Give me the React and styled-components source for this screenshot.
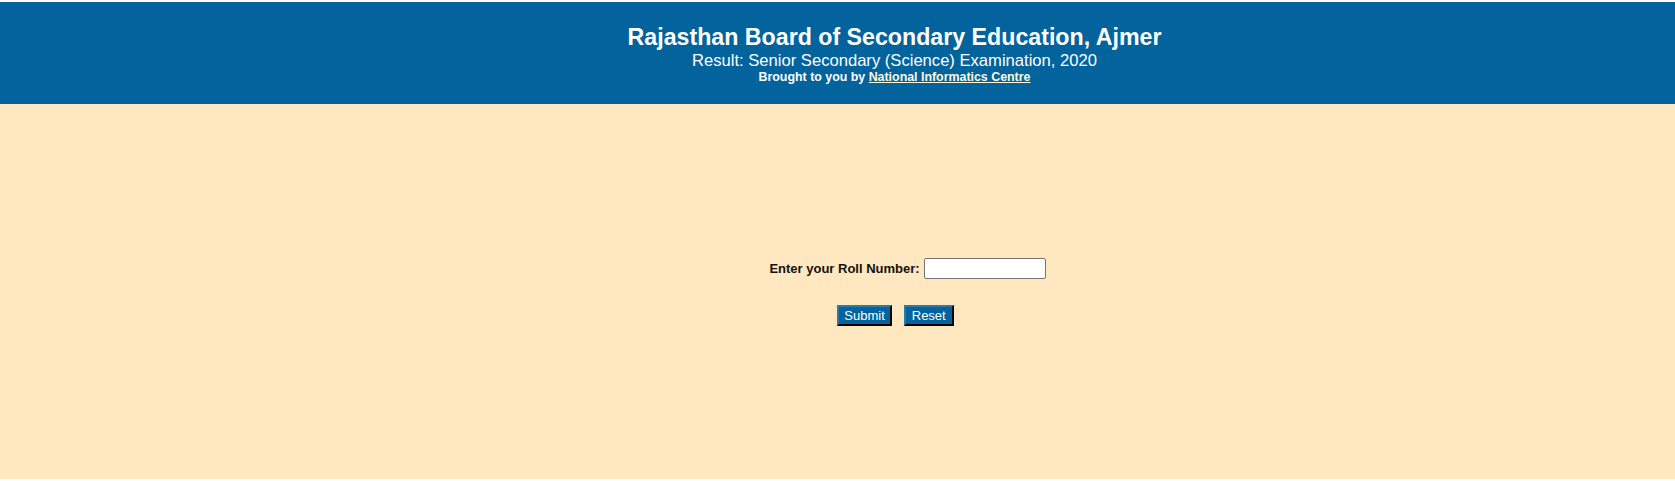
import styled, { createGlobalStyle } from "styled-components"
import { useState } from "react"

const GlobalStyle = createGlobalStyle`
  html, body {
    margin: 0;
    padding: 0;
    background: #fff;
  }
  body {
    font-family: "Liberation Sans", Arial, sans-serif;
  }
`

// the site's content column sits a bit right of the window centre
const OFFSET = 114

const Page = styled.div`
  display: flex;
  flex-direction: column;
  height: 100vh;
  box-sizing: border-box;
  padding: 2px 0 2px;
`

const Header = styled.header`
  background: #03639c;
  border-bottom: 1px solid #1d5a78;
  color: #fff;
  text-align: center;
  padding: 22px 0 17px ${OFFSET}px;
  box-sizing: border-box;
  height: 102px;
`

const Title = styled.h1`
  margin: 0;
  font-size: 23.2px;
  line-height: 27px;
  font-weight: bold;
`

const SubTitle = styled.h2`
  margin: 0;
  font-size: 16.6px;
  line-height: 19px;
  font-weight: normal;
`

const Credit = styled.p`
  margin: 0;
  font-size: 12.4px;
  line-height: 15px;
  font-weight: bold;

  a {
    color: #fff8dc;
    text-decoration: underline;
  }
`

const Main = styled.main`
  flex: 1;
  background: #ffe7bf;
  display: flex;
  flex-direction: column;
  align-items: center;
  padding: 154px 0 0 ${OFFSET}px;
`

const Form = styled.form`
  display: flex;
  flex-direction: column;
  align-items: center;
  gap: 26px;
`

const Field = styled.label`
  display: flex;
  align-items: center;
  gap: 4px;
  font-size: 13px;
  font-weight: bold;
  color: #111;
  margin-left: 26px;
`

const RollInput = styled.input`
  width: 122px;
  height: 21px;
  box-sizing: border-box;
  border: 1px solid #767676;
  border-radius: 2px;
  background: #fff;
  padding: 1px 4px;
  font-family: inherit;
  font-size: 13px;
  outline: none;
`

const Actions = styled.div`
  display: flex;
  gap: 12px;
  margin-left: 2px;
`

const Button = styled.button`
  height: 21px;
  box-sizing: border-box;
  padding: 0 ${(p) => p.$pad}px;
  background: #03639c;
  color: #fff;
  font-family: "Liberation Sans", Arial, sans-serif;
  font-size: 13px;
  border: 2px outset #2a7ab0;
  border-right-color: #1a1a1a;
  border-bottom-color: #1a1a1a;
  cursor: pointer;
`

const App = () => {
  const [roll, setRoll] = useState("")

  return (
    <>
      <GlobalStyle />
      <Page>
        <Header>
          <Title>Rajasthan Board of Secondary Education, Ajmer</Title>
          <SubTitle>Result: Senior Secondary (Science) Examination, 2020</SubTitle>
          <Credit>
            Brought to you by <a href="#">National Informatics Centre</a>
          </Credit>
        </Header>
        <Main>
          <Form onSubmit={(e) => e.preventDefault()} onReset={() => setRoll("")}>
            <Field>
              Enter your Roll Number:
              <RollInput value={roll} onChange={(e) => setRoll(e.target.value)} />
            </Field>
            <Actions>
              <Button type="submit" $pad={5}>Submit</Button>
              <Button type="reset" $pad={6}>Reset</Button>
            </Actions>
          </Form>
        </Main>
      </Page>
    </>
  )
}

export default App
